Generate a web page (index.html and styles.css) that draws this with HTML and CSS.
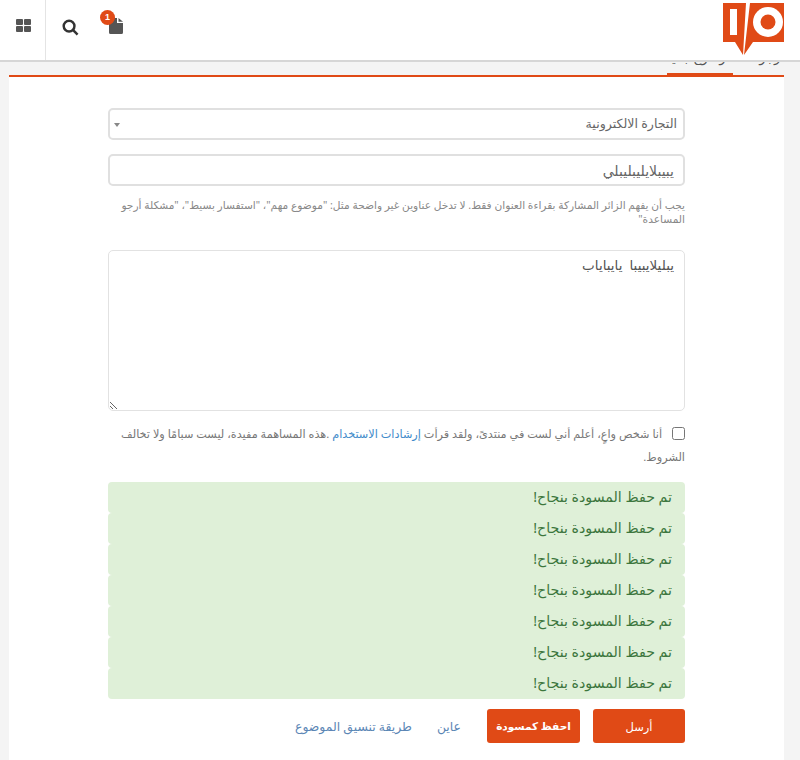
FILE: index.html
```html
<!DOCTYPE html>
<html lang="ar" dir="rtl">
<head>
<meta charset="utf-8">
<title>موضوع جديد</title>
<link rel="stylesheet" href="styles.css">
</head>
<body>
<header class="topbar">
  <a class="logo" href="#" aria-label="IO">
    <svg width="62" height="52" viewBox="0 0 62 52">
      <path class="logo-fill" d="M0 0H23L20 52 12 39H0Z"/>
      <path class="logo-fill" d="M27 0H61V39H30L21 52Z"/>
      <rect class="logo-cut" x="7" y="6" width="7" height="26"/>
      <circle class="logo-cut" cx="45" cy="19" r="15"/>
      <circle class="logo-fill" cx="45" cy="19" r="7.5"/>
    </svg>
  </a>
  <nav class="tools">
    <a class="tool tool-file" href="#">
      <span class="badge">1</span>
      <svg width="14" height="16" viewBox="0 0 14 16"><path class="icon-fill" d="M0 1.5Q0 0 1.5 0H8V5H14V14.500Q14 16 12.500 16H1.500Q0 16 0 14.500ZM9.500 0 14 3.800H9.500Z"/></svg>
    </a>
    <a class="tool tool-search" href="#">
      <svg width="17" height="17" viewBox="0 0 18 18"><circle class="icon-line" cx="7.500" cy="7.500" r="5.700"/><path class="icon-line" d="M11.800 11.800 16.500 16.500"/></svg>
    </a>
    <a class="tool tool-grid" href="#">
      <svg width="15" height="13" viewBox="0 0 15 13"><rect class="icon-fill" width="7" height="6" rx="1"/><rect class="icon-fill" x="8" width="7" height="6" rx="1"/><rect class="icon-fill" y="7" width="7" height="6" rx="1"/><rect class="icon-fill" x="8" y="7" width="7" height="6" rx="1"/></svg>
    </a>
  </nav>
</header>
<main class="page">
  <div class="tabs">
    <a class="tab" href="#">أرجو</a>
    <a class="tab tab-active" href="#">موضوع جديد</a>
  </div>
  <section class="card">
    <form class="form">
      <div class="select"><span>التجارة الالكترونية</span><i class="caret"></i></div>
      <input class="field" type="text" value="يبيبلايليبليبلي">
      <p class="help">يجب أن يفهم الزائر المشاركة بقراءة العنوان فقط. لا تدخل عناوين غير واضحة مثل: "موضوع مهم"، "استفسار بسيط"، "مشكلة أرجو المساعدة"</p>
      <textarea class="area">يبليلايبيبا  يايباياب</textarea>
      <label class="terms"><input class="check" type="checkbox"> أنا شخص واعٍ، أعلم أني لست في منتدىً، ولقد قرأت <a href="#">إرشادات الاستخدام</a> .هذه المساهمة مفيدة، ليست سبامًا ولا تخالف الشروط.</label>
      <div class="alerts">
        <div class="alert">تم حفظ المسودة بنجاح!</div>
        <div class="alert">تم حفظ المسودة بنجاح!</div>
        <div class="alert">تم حفظ المسودة بنجاح!</div>
        <div class="alert">تم حفظ المسودة بنجاح!</div>
        <div class="alert">تم حفظ المسودة بنجاح!</div>
        <div class="alert">تم حفظ المسودة بنجاح!</div>
        <div class="alert">تم حفظ المسودة بنجاح!</div>
      </div>
      <div class="actions">
        <button class="btn btn-send" type="button">أرسل</button>
        <button class="btn btn-draft" type="button">احفظ كمسودة</button>
        <a class="link" href="#">عاين</a>
        <a class="link" href="#">طريقة تنسيق الموضوع</a>
      </div>
    </form>
  </section>
</main>
</body>
</html>
```
FILE: styles.css
```css
* { box-sizing: border-box; }
html, body { height: 100%; }
body {
  margin: 0;
  height: 760px;
  overflow: hidden;
  background: #f4f4f4;
  color: #555;
  font-family: "Noto Sans", "DejaVu Sans", sans-serif;
  font-size: 14px;
}
a { color: #428bca; text-decoration: none; }

.topbar {
  position: fixed;
  top: 0; left: 0; right: 0;
  height: 62px;
  background: #fff;
  border-bottom: 2px solid #d6d6d6;
  display: flex;
  justify-content: space-between;
  z-index: 5;
}
.logo { margin: 3px 15px 0 0; height: 52px; position: relative; }
.logo-fill { fill: #e04a16; }
.logo-cut { fill: #fff; }
.tools { display: flex; height: 60px; }
.tool { display: flex; justify-content: center; position: relative; }
.tool-file { width: 46px; padding: 18px 0 0 4px; }
.tool-search { width: 45px; padding: 19px 0 0 3px; }
.tool-grid { width: 46px; padding: 19px 0 0 2px; border-right: 1px solid #e4e4e4; }
.icon-fill { fill: #555; }
.icon-line { fill: none; stroke: #333; stroke-width: 2.600; }
.badge {
  position: absolute;
  top: 10px; right: 22px;
  width: 15px; height: 15px;
  border-radius: 50%;
  background: #e04a16;
  color: #fff;
  font: bold 9px/15px "Liberation Sans", sans-serif;
  text-align: center;
  z-index: 1;
}

.page { padding: 0 16px 0 9px; }
.tabs { height: 75px; display: flex; align-items: flex-end; }
.tab { height: 24px; width: 51px; line-height: 12px; color: #555; font-size: 13px; white-space: nowrap; display: block; }
.tab-active { width: 66px; border-bottom: 2px solid #e04a16; }
.card {
  background: #fff;
  border-top: 2px solid #e04a16;
  height: 700px;
  padding: 31px 99px 0;
}
.form { display: block; width: 577px; }
.select, .field {
  display: block;
  width: 100%;
  height: 32px;
  border: 2px solid #e0e0e0;
  border-radius: 5px;
  background: #fff;
  color: #666;
  font: 14px/28px "Noto Sans", "DejaVu Sans", sans-serif;
}
.select { padding: 0 6px; position: relative; font-size: 12.600px; }
.caret {
  position: absolute;
  left: 4px; top: 13px;
  border: 3.500px solid transparent;
  border-top: 4px solid #888;
  border-bottom: 0;
}
.field { margin-top: 14px; padding: 0 9px; direction: rtl; outline: 0; }
.help { margin: 12px 0 24px; font-size: 10.600px; line-height: 14px; height: 28px; color: #888; }
.area {
  display: block;
  width: 100%;
  height: 161px;
  border: 1px solid #e2e2e2;
  border-radius: 5px;
  padding: 4px 10px;
  color: #555;
  font: 13.500px/20px "Noto Sans", "DejaVu Sans", sans-serif;
  outline: 0;
}
.terms { display: block; margin-top: 11px; font-size: 11.250px; line-height: 23px; color: #777; height: 60px; }
.check { width: 13px; height: 13px; margin: 0 0 0 7px; vertical-align: -2px; }
.alert {
  height: 31px;
  padding: 0 13px;
  background: #dff0d8;
  border-radius: 4px;
  color: #3c763d;
  font-size: 14.200px;
  line-height: 29px;
}
.actions { display: flex; align-items: center; margin-top: 10px; height: 34px; }
.btn {
  height: 34px;
  border: 0;
  border-radius: 3px;
  background: #e04a16;
  color: #fff;
  padding: 0;
  font-family: "Noto Sans", "DejaVu Sans", sans-serif;
}
.btn-send { width: 92px; font-size: 11.500px; margin-left: 13px; }
.btn-draft { width: 93px; font-size: 10.500px; font-weight: bold; margin-left: 26px; }
.link { font-size: 12.400px; color: #5b86b5; margin-left: 25px; }
```
